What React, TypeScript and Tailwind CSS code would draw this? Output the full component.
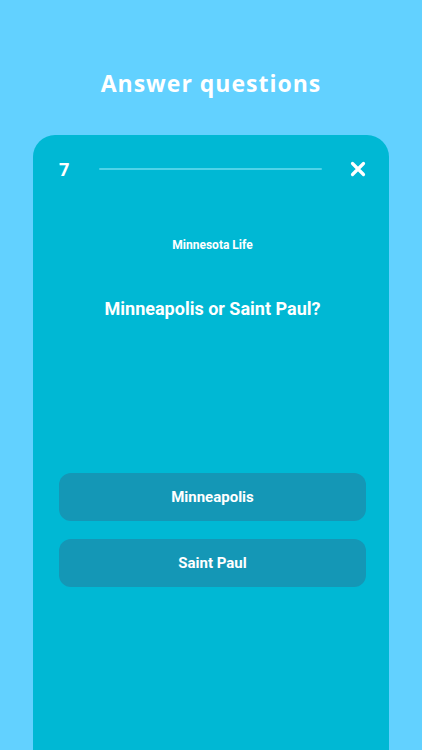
import React from 'react';

const answers = ['Minneapolis', 'Saint Paul'];

const App: React.FC = () => {
  return (
    <div className="w-[422px] h-[750px] overflow-hidden bg-[#62d1ff] flex flex-col items-center" style={{ fontFamily: 'Roboto, sans-serif' }}>
      <h1 className="mt-[66px] text-[23px] leading-[34px] font-bold tracking-[1px] text-white [font-family:'Open_Sans',sans-serif]">
        Answer questions
      </h1>

      <div className="mt-[35px] w-[356px] flex-1 bg-[#00b8d4] rounded-t-[22px] flex flex-col pl-[26px] pr-[23px]">
        <div className="flex items-center h-[26px] mt-[21px]">
          <span className="text-white text-[18px] font-bold w-[40px] [font-family:'Open_Sans',sans-serif]">7</span>
          <div className="flex-1 h-[2px] bg-[#4fd3e8] rounded-full" />
          <div className="w-[44px] flex justify-end">
            <svg width="16" height="16" viewBox="0 0 16 16">
              <path d="M2.5 2.5 L13.5 13.5 M13.5 2.5 L2.5 13.5" stroke="white" strokeWidth="3.2" strokeLinecap="round" />
            </svg>
          </div>
        </div>

        <p className="mt-[55px] text-center text-white text-[12px] font-bold leading-[16px]">Minnesota Life</p>
        <p className="mt-[44px] text-center text-white text-[18px] font-bold leading-[24px]">Minneapolis or Saint Paul?</p>

        <div className="mt-[152px] flex flex-col gap-[18px]">
          {answers.map(a => (
            <button key={a} className="h-[48px] w-full rounded-[12px] bg-[#1497b6] text-white text-[15px] font-bold">
              {a}
            </button>
          ))}
        </div>
      </div>
    </div>
  );
};

export default App;
